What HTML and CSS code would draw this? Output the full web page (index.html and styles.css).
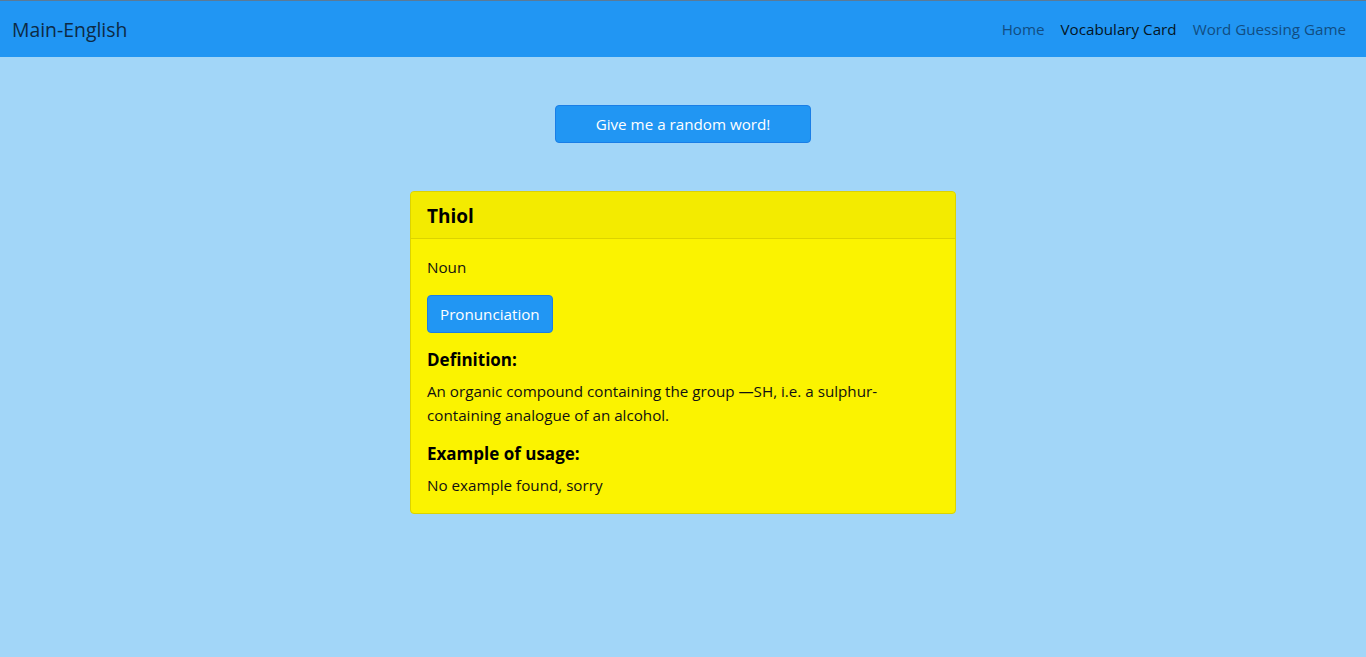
FILE: index.html
```html
<!DOCTYPE html>
<html lang="en">
<head>
<meta charset="utf-8">
<title>Main-English</title>
<link rel="stylesheet" href="styles.css">
</head>
<body>
<nav class="navbar">
  <a class="brand" href="#">Main-English</a>
  <ul class="nav">
    <li><a class="nav-link" href="#">Home</a></li>
    <li><a class="nav-link active" href="#">Vocabulary Card</a></li>
    <li><a class="nav-link" href="#">Word Guessing Game</a></li>
  </ul>
</nav>
<main class="main">
  <button class="btn btn-random">Give me a random word!</button>
  <section class="card">
    <header class="card-header"><h2 class="word">Thiol</h2></header>
    <div class="card-body">
      <p class="pos">Noun</p>
      <button class="btn btn-pron">Pronunciation</button>
      <h3 class="label">Definition:</h3>
      <p class="text">An organic compound containing the group —SH, i.e. a sulphur-containing analogue of an alcohol.</p>
      <h3 class="label">Example of usage:</h3>
      <p class="text last">No example found, sorry</p>
    </div>
  </section>
</main>
</body>
</html>
```
FILE: styles.css
```css
* { box-sizing: border-box; }
html, body { margin: 0; padding: 0; }
body {
  font-family: "Open Sans", "Noto Sans", sans-serif;
  font-size: 15.2px;
  line-height: 24px;
  color: #111;
  background: #a2d6f8;
  min-height: 657px;
  border-top: 1px solid #5b7a96;
}
.navbar {
  height: 56px;
  background: #2196f3;
  display: flex;
  align-items: center;
  justify-content: space-between;
  padding: 0 12px;
}
.brand {
  font-size: 19.4px;
  color: #0d2a44;
  text-decoration: none;
  line-height: 30px;
  padding-top: 2px;
}
.nav {
  list-style: none;
  margin: 0;
  padding: 0;
  display: flex;
}
.nav-link {
  display: block;
  padding: 0 8px;
  font-size: 15.2px;
  color: #114d82;
  text-decoration: none;
}
.nav-link.active { color: #041525; }
.main {
  display: flex;
  flex-direction: column;
  align-items: center;
  padding-top: 48px;
}
.btn {
  font-family: inherit;
  font-size: 15.2px;
  line-height: 24px;
  color: #fff;
  background: #2196f3;
  border: 1px solid #1a7ee6;
  border-radius: 4px;
  padding: 6px 12px;
  cursor: pointer;
}
.btn-random {
  width: 256px;
  height: 38px;
  margin-bottom: 48px;
}
.card {
  width: 546px;
  background: #fbf300;
  border: 1px solid #dcd300;
  border-radius: 4px;
}
.card-header {
  background: #f3eb00;
  border-bottom: 1px solid #dcd300;
  padding: 12px 16px 10px;
  border-radius: 4px 4px 0 0;
}
.word {
  margin: 0;
  font-size: 19px;
  line-height: 24px;
  font-weight: 700;
  color: #000;
}
.card-body {
  padding: 16px;
  display: flex;
  flex-direction: column;
  align-items: flex-start;
}
.pos { margin: 0 0 16px; }
.btn-pron {
  height: 38px;
  margin-bottom: 16px;
}
.label {
  margin: 0 0 8px;
  font-size: 17px;
  line-height: 22px;
  font-weight: 700;
  color: #000;
}
.text { margin: 0 0 16px; }
.text.last { margin-bottom: 0; }
```
